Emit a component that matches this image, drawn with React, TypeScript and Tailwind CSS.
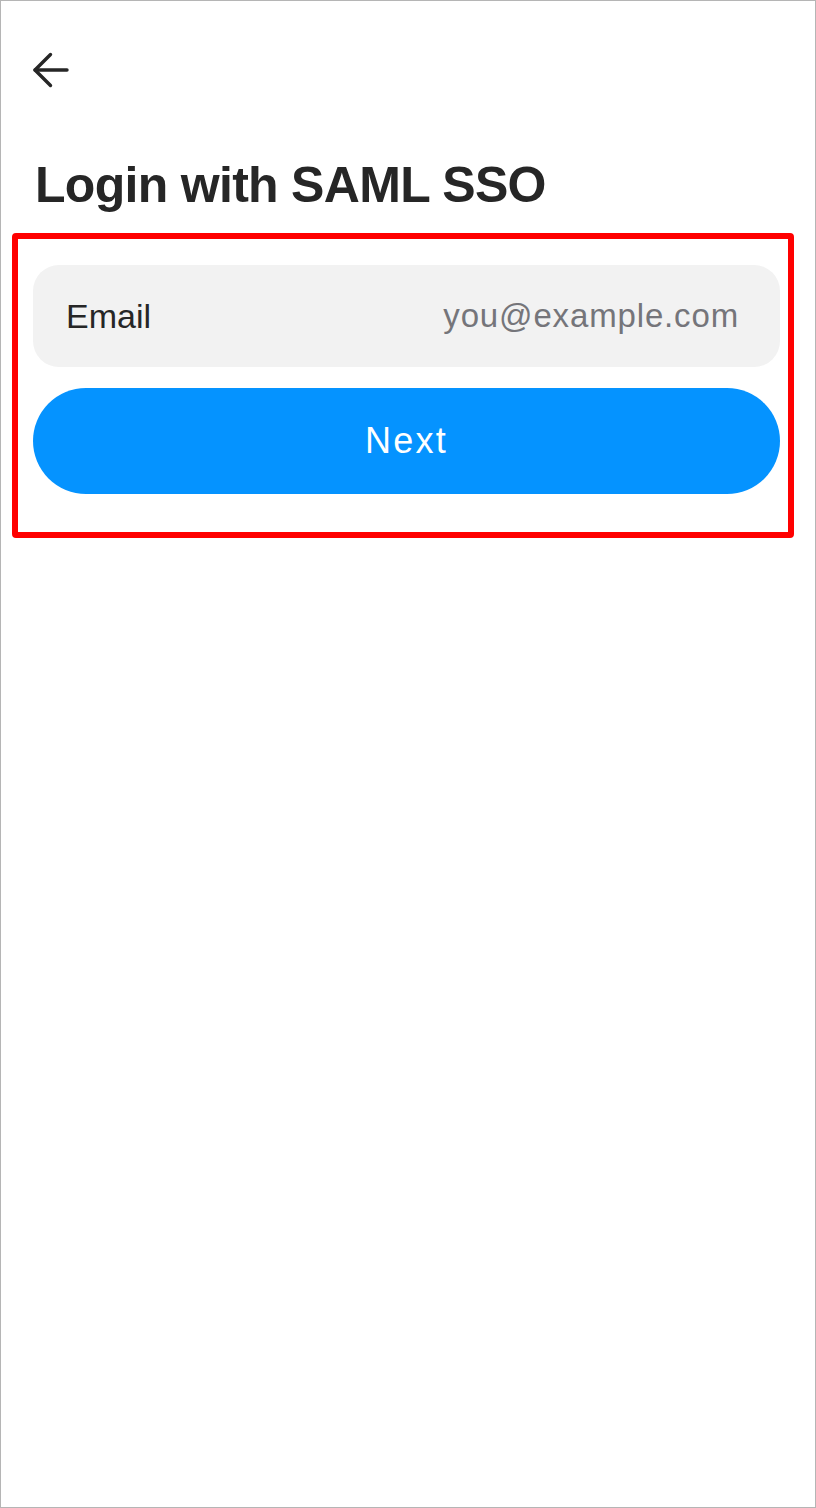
export default function App() {
    return (
        <div className="h-[1508px] w-[816px] border border-[#b5b5b5] bg-white font-['Liberation_Sans',Arial,sans-serif] text-[#262626]">
            <div className="pl-[31px] pt-[51px]">
                <button type="button" aria-label="Back" className="block h-[36px] w-[37px]">
                    <svg width="37" height="36" viewBox="0 0 37 36" fill="none" stroke="#262626" strokeWidth="3.4" strokeLinecap="round" strokeLinejoin="round">
                        <path d="M35 18H3" />
                        <path d="M18.5 2.5 3 18l15.5 15.5" />
                    </svg>
                </button>
            </div>

            <h1 className="mt-[69px] pl-[34px] text-[50px] leading-[56px] font-bold tracking-[-0.7px]">Login with SAML SSO</h1>

            <div className="mt-[20px] ml-[11px] w-[782px] rounded-[4px] border-[6px] border-[#ff0000] pt-[26px] pr-[8px] pb-[38px] pl-[15px]">
                <label className="flex h-[102px] items-center rounded-[26px] bg-[#f2f2f2] pr-[41px] pl-[33px]">
                    <span className="text-[34px] text-[#262626]">Email</span>
                    <input
                        type="email"
                        placeholder="you@example.com"
                        className="ml-4 min-w-0 flex-1 bg-transparent text-right text-[33px] tracking-[0.85px] text-[#262626] outline-none placeholder:text-[#75757a]"
                    />
                </label>
                <button type="button" className="mt-[21px] flex h-[106px] w-full items-center justify-center rounded-full bg-[#0593ff] text-[36px] tracking-[2.2px] text-white">
                    Next
                </button>
            </div>
        </div>
    );
}
